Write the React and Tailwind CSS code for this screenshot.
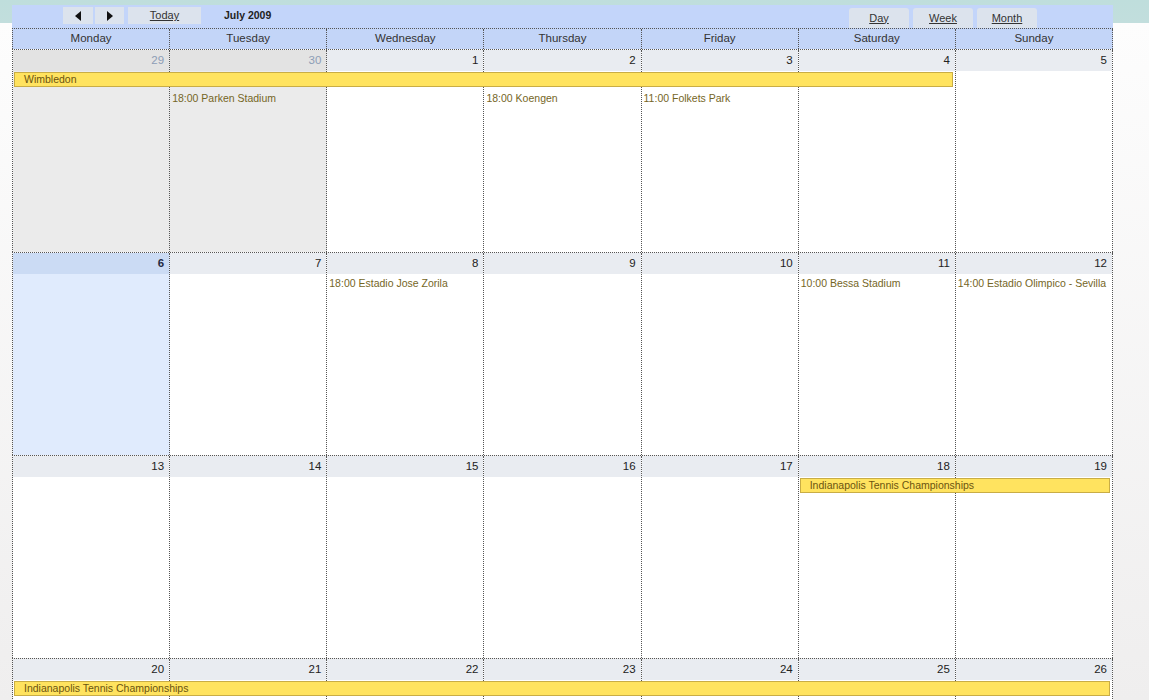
const weeks = [
  {
    days: [
      { n: 29, other: true },
      { n: 30, other: true },
      { n: 1 },
      { n: 2 },
      { n: 3 },
      { n: 4 },
      { n: 5 },
    ],
    bars: [{ title: "Wimbledon", start: 1, span: 6 }],
    events: [
      { col: 2, text: "18:00 Parken Stadium" },
      { col: 4, text: "18:00 Koengen" },
      { col: 5, text: "11:00 Folkets Park" },
    ],
  },
  {
    days: [
      { n: 6, today: true },
      { n: 7 },
      { n: 8 },
      { n: 9 },
      { n: 10 },
      { n: 11 },
      { n: 12 },
    ],
    bars: [],
    events: [
      { col: 3, text: "18:00 Estadio Jose Zorila" },
      { col: 6, text: "10:00 Bessa Stadium" },
      { col: 7, text: "14:00 Estadio Olimpico - Sevilla" },
    ],
  },
  {
    days: [13, 14, 15, 16, 17, 18, 19].map((n) => ({ n })),
    bars: [{ title: "Indianapolis Tennis Championships", start: 6, span: 2 }],
    events: [],
  },
  {
    days: [20, 21, 22, 23, 24, 25, 26].map((n) => ({ n })),
    bars: [{ title: "Indianapolis Tennis Championships", start: 1, span: 7 }],
    events: [],
  },
];

const dayNames = [
  "Monday",
  "Tuesday",
  "Wednesday",
  "Thursday",
  "Friday",
  "Saturday",
  "Sunday",
];

const colStart = [
  "col-start-1",
  "col-start-2",
  "col-start-3",
  "col-start-4",
  "col-start-5",
  "col-start-6",
  "col-start-7",
];
const colSpan = [
  "col-span-1",
  "col-span-2",
  "col-span-3",
  "col-span-4",
  "col-span-5",
  "col-span-6",
  "col-span-7",
];

function Arrow({ left }) {
  return (
    <svg width="7" height="10" viewBox="0 0 7 10">
      {left ? (
        <path d="M6 0 L6 10 L0 5 Z" fill="#111" />
      ) : (
        <path d="M1 0 L1 10 L7 5 Z" fill="#111" />
      )}
    </svg>
  );
}

export default function App() {
  return (
    <div
      className="h-[700px] w-full overflow-hidden pt-[5px] pl-[12px] bg-[linear-gradient(to_bottom,#bfdedc_0px,#c2dedd_23px,#fdfdfd_23px,#efeeee_100%)] text-[11px] text-[#333]"
      style={{ fontFamily: '"Liberation Sans", Arial, sans-serif' }}
    >
      <div className="w-[1101px]">
        {/* Toolbar */}
        <div className="h-[23px] bg-[#c3d5fa] flex items-start">
          <div className="flex items-center gap-[2px] ml-[51px] mt-[2px]">
            <button className="w-[30px] h-[17px] bg-[#dce3ed] flex items-center justify-center">
              <Arrow left />
            </button>
            <button className="w-[29px] h-[17px] bg-[#dce3ed] flex items-center justify-center">
              <Arrow />
            </button>
            <button className="ml-[2px] w-[73px] h-[17px] bg-[#dce3ed] underline text-[#333]">
              Today
            </button>
            <span className="ml-[21px] font-bold text-[#222] text-[10.5px]">
              July 2009
            </span>
          </div>
          <div className="ml-auto mr-[76px] flex gap-[4px] self-end">
            {["Day", "Week", "Month"].map((t) => (
              <button
                key={t}
                className="w-[60px] h-[20px] rounded-t-[3px] bg-[#dce3ed] underline text-[#333]"
              >
                {t}
              </button>
            ))}
          </div>
        </div>

        {/* Day names */}
        <div className="grid grid-cols-7 h-[21px] border-t border-l border-dotted border-[#555] bg-[#c3d5f8]">
          {dayNames.map((d) => (
            <div
              key={d}
              className="border-r border-dotted border-[#555] flex items-center justify-center text-[#333] text-[11.5px]"
            >
              {d}
            </div>
          ))}
        </div>

        {/* Weeks */}
        {weeks.map((w, wi) => (
          <div
            key={wi}
            className="grid grid-cols-7 grid-rows-[21px_auto_1fr] h-[203px] border-t border-l border-dotted border-[#555]"
          >
            {w.days.map((d, di) => (
              <div
                key={di}
                className={`${colStart[di]} row-start-1 row-end-4 border-r border-dotted border-[#555] flex flex-col ${
                  d.other ? "bg-[#ebebeb]" : d.today ? "bg-[#e0ebfd]" : "bg-white"
                }`}
              >
                <div
                  className={`h-[21px] flex items-center justify-end pr-[5px] text-[11.5px] ${
                    d.other
                      ? "bg-[#e3e3e3] text-[#8d9db6]"
                      : d.today
                      ? "bg-[#cbdbf4] font-bold text-[#1f2a44]"
                      : "bg-[#e9ecf1] text-[#222]"
                  }`}
                >
                  {d.n}
                </div>
              </div>
            ))}

            {w.bars.map((b, bi) => (
              <div
                key={bi}
                className={`${colStart[b.start - 1]} ${colSpan[b.span - 1]} row-start-2 ml-[1px] mr-[3px] mt-[1px] mb-[2px] h-[15px] bg-[#ffe35f] border border-[#c9ad45] text-[#6b5410] pl-[9px] text-[10.5px] leading-[13px] whitespace-nowrap overflow-hidden`}
              >
                {b.title}
              </div>
            ))}

            {w.events.map((e, ei) => (
              <div
                key={ei}
                className={`${colStart[e.col - 1]} row-start-3 self-start pl-[2px] pt-[2px] text-[10.5px] text-[#75661f] whitespace-nowrap overflow-hidden mr-[1px]`}
              >
                {e.text}
              </div>
            ))}
          </div>
        ))}
      </div>
    </div>
  );
}
